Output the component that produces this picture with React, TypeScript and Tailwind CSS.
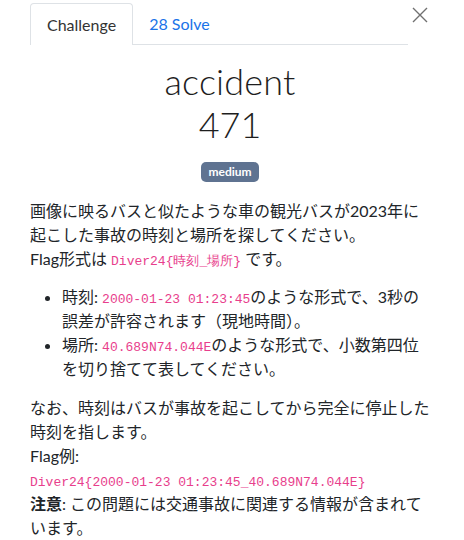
const Code = ({ children }: { children: React.ReactNode }) => (
    <code className="font-['Liberation_Mono',monospace] text-[13px] leading-none text-[#e83e8c]">{children}</code>
);

export default function App() {
    return (
        <div className="w-[464px] h-[540px] bg-white font-['Lato','Noto_Sans_CJK_JP',sans-serif] text-[#212529] overflow-hidden">
            <div className="flex items-start">
                <nav className="ml-[30px] mt-[3px] w-[378px] flex border-b border-[#dee2e6]">
                    <button type="button" className="px-4 py-2 leading-6 text-base text-[#333] border border-[#dee2e6] border-b-0 rounded-t bg-white -mb-px h-[42px]">
                        Challenge
                    </button>
                    <button type="button" className="px-4 py-2 leading-6 text-base text-[#1a73e8]">
                        28 Solve
                    </button>
                </nav>
                <button type="button" className="ml-[4px] mt-[7px] w-[16px] h-[16px] flex items-center justify-center">
                    <svg width="16" height="16" viewBox="0 0 16 16" stroke="#707070" strokeWidth="1.4" fill="none">
                        <path d="M1 1L15 15M15 1L1 15" />
                    </svg>
                </button>
            </div>

            <div className="w-[400px] ml-[30px]">
                <h3 className="text-center text-[36px] font-light text-[#1e1e1e] leading-[43px] tracking-[0.2px] mt-[15px]">accident</h3>
                <h4 className="text-center text-[36px] font-light text-[#1e1e1e] leading-[43px]">471</h4>
                <div className="flex justify-center mt-[16px]">
                    <span className="bg-[#5f7391] text-white text-[12px] font-bold leading-[20px] px-[7px] rounded-[5px]">medium</span>
                </div>

                <div className="mt-[17px] text-base leading-6">
                    <p>
                        画像に映るバスと似たような車の観光バスが2023年に起こした事故の時刻と場所を探してください。
                        <br />
                        Flag形式は <Code>Diver24{"{"}時刻_場所{"}"}</Code> です。
                    </p>
                    <ul className="list-disc pl-[32px] mt-[14px]">
                        <li>時刻: <Code>2000-01-23 01:23:45</Code>のような形式で、3秒の誤差が許容されます（現地時間）。</li>
                        <li>場所: <Code>40.689N74.044E</Code>のような形式で、小数第四位を切り捨てて表してください。</li>
                    </ul>
                    <p className="mt-[15px]">
                        なお、時刻はバスが事故を起こしてから完全に停止した時刻を指します。
                        <br />
                        Flag例:
                        <br />
                        <Code>Diver24{"{"}2000-01-23 01:23:45_40.689N74.044E{"}"}</Code>
                        <br />
                        <strong>注意</strong>: この問題には交通事故に関連する情報が含まれています。
                    </p>
                </div>
            </div>
        </div>
    );
}
